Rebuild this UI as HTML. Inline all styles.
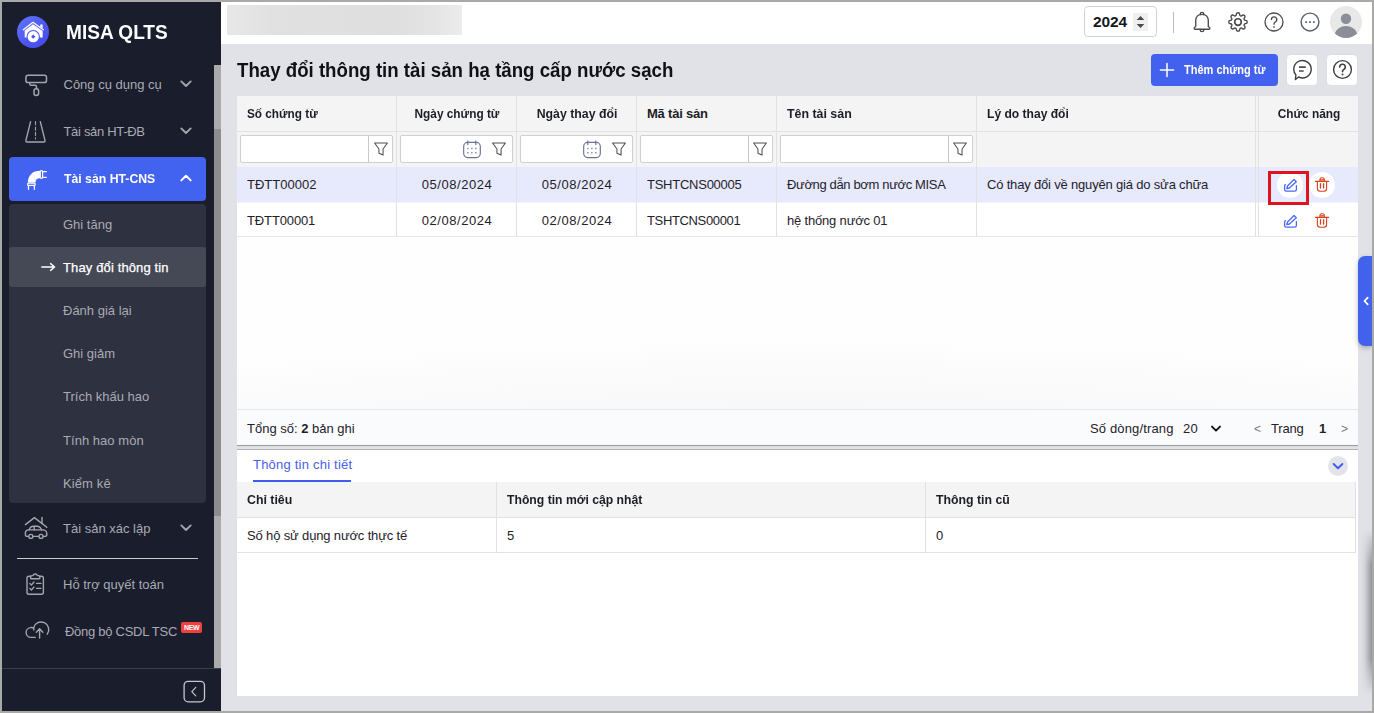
<!DOCTYPE html>
<html lang="vi">
<head>
<meta charset="utf-8">
<title>MISA QLTS</title>
<style>
*{box-sizing:border-box;margin:0;padding:0}
html,body{width:1374px;height:713px;overflow:hidden;background:#a9a9a8}
body{font-family:"Liberation Sans",sans-serif;font-size:13px;color:#1f2229;position:relative}
.abs{position:absolute}
#frame{position:absolute;left:2px;top:2px;width:1370px;height:709px;background:#e1e2e8;overflow:hidden}
/* ---------- sidebar ---------- */
#side{position:absolute;left:0;top:0;width:219px;height:709px;background:#1a1d2c}
#side .t{position:absolute;white-space:nowrap;color:#a9abb3;font-size:13px;line-height:16px}
#logo{position:absolute;left:15px;top:14px;width:32px;height:32px;border-radius:50%;background:linear-gradient(140deg,#6278f8 0%,#4f5af1 50%,#4646ee 100%)}
#brand{position:absolute;left:64px;top:18px;font-weight:bold;font-size:20px;line-height:24px;color:#fff;white-space:nowrap;}
#act{position:absolute;left:7px;top:155px;width:197px;height:44px;border-radius:4px;background:#4262f0}
#sub{position:absolute;left:7px;top:202px;width:197px;height:299px;border-radius:4px;background:#2e3140}
#subsel{position:absolute;left:7px;top:245px;width:197px;height:40px;border-radius:3px;background:#454855}
#sdiv{position:absolute;left:15px;top:556px;width:181px;height:1px;background:#c9cad0}
#sbotbar{position:absolute;left:0;top:666px;width:219px;height:43px;background:#1a1d2c;border-top:1px solid #3b3e4c}
#new{position:absolute;left:179px;top:620px;width:21px;height:11px;border-radius:2px;background:#ef4040;color:#fff;font-weight:bold;font-size:7px;line-height:11px;text-align:center;letter-spacing:-.3px;text-indent:.3px}
#strack{position:absolute;left:212px;top:63px;width:7px;height:603px;background:#acabab}
#sthumb{position:absolute;left:212px;top:127px;width:7px;height:387px;background:#8d8d8d}
/* ---------- top bar ---------- */
#top{position:absolute;left:219px;top:0;width:1151px;height:42px;background:#fff}
#blur{position:absolute;left:5.700px;top:2.800px;width:235.200px;height:30.300px;background:linear-gradient(90deg,#e9e8e9 0%,#e2e1e2 18%,#dfdfdf 70%,#e4e4e4 88%,#ececec 100%);filter:blur(.4px)}
#year{position:absolute;left:863px;top:4px;width:73px;height:31px;border:1px solid #cfd3e0;border-radius:4px;background:#fff}
#year b{position:absolute;left:8px;top:6px;font-size:15.500px;line-height:18px;color:#16181f}
#spin{position:absolute;left:48px;top:6px;width:15px;height:18px;background:#efefef}
#tsep{position:absolute;left:952px;top:10px;width:1px;height:21px;background:#b9bcc6}
#avatar{position:absolute;left:1109px;top:4px;width:32px;height:32px;border-radius:50%;background:#e8e8e8;overflow:hidden}
/* ---------- title row ---------- */
#title{position:absolute;left:235px;top:56px;font-size:20px;font-weight:bold;line-height:24px;color:#0f1115;white-space:nowrap}
#btnadd{position:absolute;left:1149px;top:52px;width:127px;height:32px;border-radius:4px;background:#4261ee;color:#fff;font-weight:bold;font-size:13px}
#btnadd span{position:absolute;left:33px;top:8px;line-height:16px;white-space:nowrap}
.sq{position:absolute;top:52.800px;width:30.400px;height:30.400px;border-radius:4px;background:#fff;box-shadow:0 -.5px 0 .3px rgba(205,210,224,.55)}
/* ---------- grid ---------- */
#grid{position:absolute;left:235px;top:94px;width:1121px;height:351px;background:#fff}
.hdr{position:absolute;left:0;top:0;width:1121px;height:36px;background:#f4f4f4;border-bottom:1px solid #e3e3e3}
.flt{position:absolute;left:0;top:36px;width:1121px;height:35px;background:#f4f4f4}
.r1{position:absolute;left:0;top:71px;width:1121px;height:35px;background:#e7eafd}
.r2{position:absolute;left:0;top:106px;width:1121px;height:35px;background:#fff;border-bottom:1px solid #e6e6e6;border-top:1px solid #f1f3fe}
.vl{position:absolute;top:0;width:1px;height:141px;background:#e2e2e2}
.c{position:absolute;white-space:nowrap;line-height:16px;font-size:13px;color:#1f2229}
.h{font-weight:bold;color:#1c1e26}
.inp{position:absolute;top:39px;height:28px;background:#fff;border:1px solid #cfcfcf;border-radius:2px}
#foot{position:absolute;left:0;top:313px;width:1121px;height:38px;border-top:1px solid #e8e8e8;background:#fafbfd}
/* ---------- detail ---------- */
#det{position:absolute;left:235px;top:448px;width:1121px;height:246px;background:#fff}
.ctr{text-align:center}
.circ{position:absolute;width:26px;height:26px;border-radius:50%;background:#fff}
#red{position:absolute;left:1031px;top:75px;width:41px;height:34px;border:3px solid #df131c}
#spl1{position:absolute;left:235px;top:443px;width:1121px;height:1px;background:#9c9c9c}
#spl2{position:absolute;left:235px;top:444px;width:1121px;height:1px;background:#dedede}
#spl3{position:absolute;left:235px;top:447px;width:1121px;height:1px;background:#b2b2b2}
#tab{position:absolute;left:16px;top:6.500px;line-height:16px;font-size:13px;color:#4a5ee6;white-space:nowrap}
#tabul{position:absolute;left:16px;top:30px;width:98px;height:2px;background:#3f5bf0}
#dcirc{position:absolute;left:1091px;top:6px;width:20px;height:20px;border-radius:50%;background:#e3e4ea}
#dh{position:absolute;left:0;top:32px;width:1119px;height:36px;background:#f4f4f4;border-bottom:1px solid #e3e3e3}
#dr{position:absolute;left:0;top:68px;width:1119px;height:35px;background:#fff;border-bottom:1px solid #e3e3e3}
#handle{position:absolute;left:1356px;top:254px;width:14px;height:90px;border-radius:7px 0 0 7px;background:#4262ee;box-shadow:0 2px 5px rgba(60,60,80,.35)}
#rshadow{position:absolute;left:1358px;top:526px;width:12px;height:168px;background:linear-gradient(90deg,rgba(100,100,108,0) 0%,rgba(100,100,108,.10) 35%,rgba(100,100,108,.36) 70%,rgba(100,100,108,.62) 100%);-webkit-mask-image:linear-gradient(180deg,transparent 0,#000 22%,#000 78%,transparent 100%);mask-image:linear-gradient(180deg,transparent 0,#000 22%,#000 78%,transparent 100%)}
</style>
</style>
</head>
<body>
<div id="frame">

<!-- SIDEBAR -->
<div id="side">
  <div id="logo">
    <svg width="32" height="32" viewBox="0 0 32 32" style="position:absolute;left:0;top:0">
      <path d="M6.300 13.700 L16 6.300 L26.300 13.700" fill="none" stroke="#fff" stroke-width="1.300" stroke-linecap="round" stroke-linejoin="round"/>
      <path d="M23.300 8.500h2.300v3.900l-2.300-1.700z" fill="#fff"/>
      <path d="M7.700 14.500 L16 8.200 L25.700 15 V21.500 H7.700 Z" fill="#fff"/>
      <circle cx="16.200" cy="20.700" r="6.700" fill="#4f57f0"/>
      <circle cx="16.200" cy="20.700" r="5.600" fill="#fff"/>
      <path d="M16.200 18.600 L18.300 20.700 L16.200 22.800 L14.100 20.700Z" fill="#4a50ee"/>
    </svg>
  </div>
  <div id="brand" style="transform:scaleX(0.954);transform-origin:left;/*fit*/">MISA QLTS</div>

  <!-- item 1 -->
  <svg class="abs" style="left:20px;top:68px" width="30" height="30" viewBox="0 0 30 30" fill="none" stroke="#a4a5ac" stroke-width="1.5" stroke-linecap="round" stroke-linejoin="round">
    <rect x="3.9" y="5.2" width="20.6" height="7.4" rx="2.2"/>
    <path d="M7.8 12.8v1.2a1.3 1.3 0 0 0 1.3 1.3h3.9a1.5 1.5 0 0 1 1.5 1.5v1.6"/>
    <rect x="12" y="18.8" width="4.6" height="6.6" rx="2.2"/>
  </svg>
  <div class="t" style="left:61.5px;top:74.5px">Công cụ dụng cụ</div>
  <svg class="abs" style="left:177px;top:77px" width="14" height="10" viewBox="0 0 14 10" fill="none" stroke="#a4a5ac" stroke-width="1.9" stroke-linecap="round" stroke-linejoin="round"><path d="M2.300 2.400 L7 7 L11.700 2.400"/></svg>

  <!-- item 2 -->
  <svg class="abs" style="left:20px;top:115px" width="30" height="30" viewBox="0 0 30 30" fill="none" stroke="#a4a5ac" stroke-width="1.4" stroke-linecap="round" stroke-linejoin="round">
    <path d="M8.600 4.600 L3.900 23.400 a1.200 1.200 0 0 0 1.100 1.600 h16.900 a1.200 1.200 0 0 0 1.100 -1.600 L18.300 4.600"/>
    <path d="M13.500 4.600v17.400" stroke-dasharray="3.200 2.200" stroke-width="1.100"/>
  </svg>
  <div class="t" style="left:61.5px;top:121.5px;letter-spacing:-0.32px;/*fit*/">Tài sản HT-ĐB</div>
  <svg class="abs" style="left:177px;top:124px" width="14" height="10" viewBox="0 0 14 10" fill="none" stroke="#a4a5ac" stroke-width="1.9" stroke-linecap="round" stroke-linejoin="round"><path d="M2.300 2.400 L7 7 L11.700 2.400"/></svg>

  <!-- item 3 active -->
  <div id="act"></div>
  <svg class="abs" style="left:22px;top:165px" width="26" height="26" viewBox="0 0 26 26">
    <path d="M3.900 15.600 C3.900 8.400 8.600 3.700 16 3.700 L16 11.300 C13 11.300 11.500 12.700 11.500 15.600 Z" fill="#fff"/>
    <rect x="16.300" y="3.700" width="2.300" height="7.500" rx=".9" fill="none" stroke="#fff" stroke-width="1.200"/>
    <path d="M19.200 4.700h3.100M19.200 10.400h3.100" stroke="#fff" stroke-width="1.200" fill="none" stroke-linecap="round"/>
    <rect x="3.600" y="16.100" width="7.600" height="2.300" rx=".9" fill="none" stroke="#fff" stroke-width="1.200"/>
    <path d="M4.500 19v3.300M10.400 19v3.300" stroke="#fff" stroke-width="1.300" fill="none" stroke-linecap="round"/>
  </svg>
  <div class="t tb" style="left:61.5px;top:168.5px;color:#fff;font-weight:bold;transform:scaleX(0.943);transform-origin:left;/*fit*/">Tài sản HT-CNS</div>
  <svg class="abs" style="left:177px;top:171px" width="14" height="10" viewBox="0 0 14 10" fill="none" stroke="#fff" stroke-width="2" stroke-linecap="round" stroke-linejoin="round"><path d="M2.3 7.4 L7 2.8 L11.7 7.4"/></svg>

  <!-- submenu -->
  <div id="sub"></div>
  <div id="subsel"></div>
  <div class="t" style="left:61px;top:214.5px">Ghi tăng</div>
  <svg class="abs" style="left:38px;top:259px" width="18" height="12" viewBox="0 0 18 12" fill="none" stroke="#fff" stroke-width="1.4" stroke-linecap="round" stroke-linejoin="round"><path d="M1.8 6h12.6M10.6 2.6 L14.6 6 L10.6 9.4"/></svg>
  <div class="t" style="left:61px;top:257.5px;color:#fff;-webkit-text-stroke:.25px #fff;letter-spacing:0.13px;/*fit*/">Thay đổi thông tin</div>
  <div class="t" style="left:61px;top:300.5px">Đánh giá lại</div>
  <div class="t" style="left:61px;top:343.5px">Ghi giảm</div>
  <div class="t" style="left:61px;top:386.5px">Trích khấu hao</div>
  <div class="t" style="left:61px;top:430.5px;letter-spacing:0.04px;/*fit*/">Tính hao mòn</div>
  <div class="t" style="left:61px;top:473.5px;letter-spacing:0.11px;/*fit*/">Kiểm kê</div>

  <!-- item 4 -->
  <svg class="abs" style="left:19px;top:511px" width="32" height="32" viewBox="0 0 32 32" fill="none" stroke="#a4a5ac" stroke-width="1.4" stroke-linecap="round" stroke-linejoin="round">
    <path d="M4.4 11.6 L13.4 4.6 L25.8 14.2"/>
    <path d="M21 4.4v6"/>
    <path d="M8.2 16.9 C8.8 14.4 10 13.2 12.6 13.2 h3.4 c2.4 0 3.6 1.4 4.6 3.7"/>
    <path d="M13.2 13.4v3.4"/>
    <path d="M7.2 23.4 H6.4 a2 2 0 0 1 -2 -2 v-1.7 a2.8 2.8 0 0 1 2.8 -2.8 H21.8 a4 4 0 0 1 4 4 v.5 a2 2 0 0 1 -2 2 H22.6 M12.4 23.4h5"/>
    <circle cx="9.800" cy="23.400" r="2"/>
    <circle cx="20" cy="23.400" r="2"/>
  </svg>
  <div class="t" style="left:61px;top:518.5px">Tài sản xác lập</div>
  <svg class="abs" style="left:177px;top:521px" width="14" height="10" viewBox="0 0 14 10" fill="none" stroke="#a4a5ac" stroke-width="1.9" stroke-linecap="round" stroke-linejoin="round"><path d="M2.300 2.400 L7 7 L11.700 2.400"/></svg>

  <div id="sdiv"></div>

  <!-- item 5 -->
  <svg class="abs" style="left:19px;top:566px" width="32" height="32" viewBox="0 0 32 32" fill="none" stroke="#a4a5ac" stroke-width="1.4" stroke-linecap="round" stroke-linejoin="round">
    <path d="M9.400 8.200 H8 a2 2 0 0 0 -2 2 V24.200 a2 2 0 0 0 2 2 H20.400 a2 2 0 0 0 2 -2 V10.200 a2 2 0 0 0 -2 -2 H19"/>
    <path d="M9.6 10.2 v-1.2 a1.4 1.4 0 0 1 1.4 -1.4 h1 a2.3 2.3 0 0 1 4.4 0 h1 a1.4 1.4 0 0 1 1.4 1.4 v1.2 a.6.6 0 0 1 -.6 .6 H10.2 a.6 .6 0 0 1 -.6 -.6z"/>
    <path d="M8.8 15.4 l1.6 1.6 2.6 -3" stroke-width="1.3"/>
    <path d="M8.8 20.4 l1.6 1.6 2.6 -3" stroke-width="1.3"/>
    <path d="M15.6 15.4h4.4M15.6 20.4h4.4"/>
  </svg>
  <div class="t" style="left:61px;top:574.5px">Hỗ trợ quyết toán</div>

  <!-- item 6 -->
  <svg class="abs" style="left:19.500px;top:611.300px" width="34" height="32" viewBox="0 0 34 32" fill="none" stroke="#a4a5ac" stroke-width="1.4" stroke-linecap="round" stroke-linejoin="round">
    <path d="M13.2 24.4 H9 a4.9 4.9 0 0 1 -.6 -9.76 a3.6 3.6 0 0 1 3.4 0.6 V17"/>
    <path d="M11.6 14.8 A7.7 7.7 0 1 1 25.3 21.2"/>
    <path d="M17.600 25v-9.200M14.300 19.200 l3.300 -3.400 3.300 3.400"/>
  </svg>
  <div class="t" style="left:63px;top:621.5px;letter-spacing:-0.27px;/*fit*/">Đồng bộ CSDL TSC</div>
  <div id="new">NEW</div>

  <div id="strack"></div>
  <div id="sthumb"></div>
  <div id="sthumb2"></div>
  <div id="sbotbar"></div>
  <svg class="abs" style="left:180px;top:677px" width="26" height="26" viewBox="0 0 26 26" fill="none" stroke="#c6c7cc" stroke-width="1.3" stroke-linecap="round" stroke-linejoin="round">
    <rect x="2.1" y="2.4" width="20.4" height="20.4" rx="4"/>
    <path d="M13.800 8.400 L9.800 12.600 L13.800 16.800" stroke-width="1.200"/>
  </svg>
</div>

<!-- TOPBAR -->
<div id="top">
  <div id="blur"></div>
  <div id="year"><b style="letter-spacing:-0.150px;">2024</b><div id="spin"><svg width="15" height="18" viewBox="0 0 15 18" style="position:absolute;left:0;top:0"><path d="M7.500 3 L11.300 7 H3.700Z M7.500 15 L11.300 11 H3.700Z" fill="#484848"/></svg></div></div>
  <div id="tsep"></div>
  <!-- bell -->
  <svg class="abs" style="left:969px;top:7.300px" width="24" height="26" viewBox="0 0 24 26" fill="none" stroke="#4a4a4c" stroke-width="1.350" stroke-linecap="round" stroke-linejoin="round">
    <path d="M10.200 5.800 V5.100 a1.800 1.800 0 0 1 3.600 0 V5.800"/>
    <path d="M5.700 17.200 V11.800 C5.700 7.800 8.300 5.300 12 5.300 C15.700 5.300 18.300 7.800 18.300 11.800 V17.200 C18.300 17.900 19.900 18.300 19.900 19.300 C19.900 19.900 19.500 20.200 19 20.200 H5 C4.500 20.200 4.100 19.900 4.100 19.300 C4.100 18.300 5.700 17.900 5.700 17.200 Z"/>
    <path d="M10.200 20.500 v.400 a1.800 1.700 0 0 0 3.600 0 v-.400"/>
  </svg>
  <!-- gear -->
  <svg class="abs" style="left:1005px;top:8px" width="24" height="24" viewBox="0 0 24 24" fill="none" stroke="#4a4a4c" stroke-width="1.65" stroke-linecap="round" stroke-linejoin="round">
    <circle cx="12" cy="12" r="3.3"/>
    <path d="M19.400 15 a1.650 1.650 0 0 0 .330 1.820 l.060 .060 a2 2 0 1 1 -2.830 2.830 l-.060 -.060 a1.650 1.650 0 0 0 -1.820 -.330 1.650 1.650 0 0 0 -1 1.510 V21 a2 2 0 0 1 -4 0 v-.090 A1.650 1.650 0 0 0 9 19.400 a1.650 1.650 0 0 0 -1.820 .330 l-.060 .060 a2 2 0 1 1 -2.830 -2.830 l.060 -.060 a1.650 1.650 0 0 0 .330 -1.820 1.650 1.650 0 0 0 -1.510 -1 H3 a2 2 0 0 1 0 -4 h.090 A1.650 1.650 0 0 0 4.600 9 a1.650 1.650 0 0 0 -.330 -1.820 l-.060 -.060 a2 2 0 1 1 2.830 -2.830 l.060 .060 a1.650 1.650 0 0 0 1.820 .330 H9 a1.650 1.650 0 0 0 1 -1.510 V3 a2 2 0 0 1 4 0 v.090 a1.650 1.650 0 0 0 1 1.510 1.650 1.650 0 0 0 1.820 -.330 l.060 -.060 a2 2 0 1 1 2.830 2.830 l-.060 .060 a1.650 1.650 0 0 0 -.330 1.820 V9 a1.650 1.650 0 0 0 1.510 1 H21 a2 2 0 0 1 0 4 h-.090 a1.650 1.650 0 0 0 -1.510 1z" transform="translate(12 12) scale(.84) translate(-12 -12)"/>
  </svg>
  <!-- help -->
  <svg class="abs" style="left:1041px;top:8px" width="24" height="24" viewBox="0 0 24 24" fill="none" stroke="#4a4a4c" stroke-width="1.3" stroke-linecap="round" stroke-linejoin="round">
    <circle cx="12" cy="12" r="9"/>
    <path d="M9.400 9.600 a2.700 2.700 0 1 1 3.900 2.400 c-.900 .500 -1.300 1 -1.300 2 v.300"/>
    <path d="M12 16.900v.1" stroke-width="1.7"/>
  </svg>
  <!-- more -->
  <svg class="abs" style="left:1077px;top:8px" width="24" height="24" viewBox="0 0 24 24" fill="none" stroke="#5b606c" stroke-width="1.450" stroke-linecap="butt">
    <circle cx="12" cy="12" r="8.900"/>
    <path d="M7.200 12.100h1.900M11 12.100h1.900M14.900 12.100h1.900" stroke-width="1.800" stroke="#6a6f7c"/>
  </svg>
  <div id="avatar"><svg width="32" height="32" viewBox="0 0 32 32"><circle cx="16" cy="12.800" r="5.200" fill="#8b8e99"/><path d="M4.500 30.500 a11.500 10.500 0 0 1 23 0 v3 h-23z" fill="#8b8e99"/></svg></div>
</div>

<!-- TITLE ROW -->
<div id="title" style="transform:scaleX(0.933);transform-origin:left;/*fit*/">Thay đổi thông tin tài sản hạ tầng cấp nước sạch</div>
<div id="btnadd">
  <svg class="abs" style="left:8px;top:8px" width="16" height="16" viewBox="0 0 16 16" fill="none" stroke="#fff" stroke-width="1.5" stroke-linecap="round"><path d="M8 1.400v13.200M1.400 8h13.200"/></svg>
  <span style="transform:scaleX(0.848);transform-origin:left;/*fit*/">Thêm chứng từ</span>
</div>
<div class="sq" style="left:1284.800px">
  <svg class="abs" style="left:3.900px;top:4.300px" width="24" height="24" viewBox="0 0 24 24" fill="none" stroke="#3e3e40" stroke-width="1.400" stroke-linecap="round" stroke-linejoin="round">
    <path d="M7.600 18 L4.400 20.500 L4.900 15.900 A8.700 8.700 0 1 1 7.600 18 Z"/>
    <path d="M8 8.100h6.800M8 12h4.700" stroke-width="1.600" stroke-linecap="butt" stroke="#4a4a4c"/>
  </svg>
</div>
<div class="sq" style="left:1324.900px">
  <svg class="abs" style="left:2.900px;top:2.700px" width="24" height="24" viewBox="0 0 24 24" fill="none" stroke="#3e3e40" stroke-width="1.400" stroke-linecap="round" stroke-linejoin="round">
    <circle cx="12.500" cy="12.500" r="8.900"/>
    <path d="M9.700 10.100 a2.800 2.800 0 1 1 4.100 2.400 c-.900 .500 -1.300 1 -1.300 2 v.300" stroke-width="1.600"/>
    <path d="M12.500 17.400v.1" stroke-width="1.900"/>
  </svg>
</div>

<!-- GRID -->
<div id="grid">
  <div class="abs" style="left:0;top:142px;width:1121px;height:171px;background:radial-gradient(ellipse 75% 80px at 50% 108%,#f7f7f8 0%,#fafafb 55%,#fefefe 100%)"></div>
  <div class="hdr"></div><div class="flt"></div><div class="r1"></div><div class="r2"></div>
  <div class="vl" style="left:159px"></div><div class="vl" style="left:279px"></div><div class="vl" style="left:399px"></div>
  <div class="vl" style="left:539px"></div><div class="vl" style="left:739px"></div>
  <div class="vl" style="left:1018px"></div><div class="vl" style="left:1021px"></div>

  <div class="c h" style="left:10px;top:10px;transform:scaleX(0.906);transform-origin:left;/*fit*/">Số chứng từ</div>
  <div class="c h ctr" style="left:160px;width:120px;top:10px;transform:scaleX(0.911);transform-origin:center;/*fit*/">Ngày chứng từ</div>
  <div class="c h ctr" style="left:280px;width:120px;top:10px;transform:scaleX(0.947);transform-origin:center;/*fit*/">Ngày thay đổi</div>
  <div class="c h" style="left:410px;top:10px;letter-spacing:-0.21px;/*fit*/">Mã tài sản</div>
  <div class="c h" style="left:550px;top:10px;transform:scaleX(0.953);transform-origin:left;/*fit*/">Tên tài sản</div>
  <div class="c h" style="left:750px;top:10px;transform:scaleX(0.929);transform-origin:left;/*fit*/">Lý do thay đổi</div>
  <div class="c h ctr" style="left:1023px;width:98px;top:10px;transform:scaleX(0.913);transform-origin:center;/*fit*/">Chức năng</div>

  <div class="inp" style="left:3px;width:153px"><i style="position:absolute;left:127px;top:0;width:1px;height:26px;background:#c9c9c9"></i></div>
  <div class="inp" style="left:163px;width:113px"></div>
  <div class="inp" style="left:283px;width:113px"></div>
  <div class="inp" style="left:403px;width:133px"><i style="position:absolute;left:107px;top:0;width:1px;height:26px;background:#c9c9c9"></i></div>
  <div class="inp" style="left:543px;width:193px"><i style="position:absolute;left:167px;top:0;width:1px;height:26px;background:#c9c9c9"></i></div>
  <svg class="abs" style="left:135.6px;top:45px" width="16" height="16" viewBox="0 0 16 16" fill="none" stroke="#4d4f57" stroke-width="1.05" stroke-linejoin="round" stroke-linecap="round"><path d="M1.600 2 H14.400 L10.050 8 V14.100 L5.950 12.200 V8 Z"/></svg> <svg class="abs" style="left:253.9px;top:45px" width="16" height="16" viewBox="0 0 16 16" fill="none" stroke="#4d4f57" stroke-width="1.05" stroke-linejoin="round" stroke-linecap="round"><path d="M1.600 2 H14.400 L10.050 8 V14.100 L5.950 12.200 V8 Z"/></svg> <svg class="abs" style="left:373.9px;top:45px" width="16" height="16" viewBox="0 0 16 16" fill="none" stroke="#4d4f57" stroke-width="1.05" stroke-linejoin="round" stroke-linecap="round"><path d="M1.600 2 H14.400 L10.050 8 V14.100 L5.950 12.200 V8 Z"/></svg> <svg class="abs" style="left:515.2px;top:45px" width="16" height="16" viewBox="0 0 16 16" fill="none" stroke="#4d4f57" stroke-width="1.05" stroke-linejoin="round" stroke-linecap="round"><path d="M1.600 2 H14.400 L10.050 8 V14.100 L5.950 12.200 V8 Z"/></svg> <svg class="abs" style="left:715.1px;top:45px" width="16" height="16" viewBox="0 0 16 16" fill="none" stroke="#4d4f57" stroke-width="1.05" stroke-linejoin="round" stroke-linecap="round"><path d="M1.600 2 H14.400 L10.050 8 V14.100 L5.950 12.200 V8 Z"/></svg> <svg class="abs" style="left:225.2px;top:44px" width="20" height="20" viewBox="0 0 20 20" fill="none" stroke="#6a7290" stroke-width="1.150" stroke-linecap="round"><rect x="1.700" y="2.400" width="16.600" height="15.200" rx="4"/><path d="M5.800 .900v3.800M13.800 .900v3.800"/><path d="M5.200 8.600h1.300M9.200 8.600h1.300M13.200 8.600h1.300M5.200 12.700h1.300M9.200 12.700h1.300M13.200 12.700h1.300" stroke-width="1.500" stroke-linecap="butt" stroke="#7a819b"/></svg> <svg class="abs" style="left:345.2px;top:44px" width="20" height="20" viewBox="0 0 20 20" fill="none" stroke="#6a7290" stroke-width="1.150" stroke-linecap="round"><rect x="1.700" y="2.400" width="16.600" height="15.200" rx="4"/><path d="M5.800 .900v3.800M13.800 .900v3.800"/><path d="M5.200 8.600h1.300M9.200 8.600h1.300M13.200 8.600h1.300M5.200 12.700h1.300M9.200 12.700h1.300M13.200 12.700h1.300" stroke-width="1.500" stroke-linecap="butt" stroke="#7a819b"/></svg>

  <div class="c" style="left:10px;top:81px">TĐTT00002</div>
  <div class="c ctr d" style="left:160px;width:120px;top:81px;letter-spacing:0.54px;/*fit*/">05/08/2024</div>
  <div class="c ctr d" style="left:280px;width:120px;top:81px;letter-spacing:0.54px;/*fit*/">05/08/2024</div>
  <div class="c" style="left:410px;top:81px;letter-spacing:-0.25px;/*fit*/">TSHTCNS00005</div>
  <div class="c" style="left:550px;top:81px;letter-spacing:-0.35px;/*fit*/">Đường dẫn bơm nước MISA</div>
  <div class="c" style="left:750px;top:81px;letter-spacing:-0.18px;/*fit*/">Có thay đổi về nguyên giá do sửa chữa</div>

  <div class="c" style="left:10px;top:117px;letter-spacing:-0.13px;/*fit*/">TĐTT00001</div>
  <div class="c ctr d" style="left:160px;width:120px;top:117px;letter-spacing:0.54px;/*fit*/">02/08/2024</div>
  <div class="c ctr d" style="left:280px;width:120px;top:117px;letter-spacing:0.54px;/*fit*/">02/08/2024</div>
  <div class="c" style="left:410px;top:117px;letter-spacing:-0.35px;/*fit*/">TSHTCNS00001</div>
  <div class="c" style="left:550px;top:117px;letter-spacing:-0.18px;/*fit*/">hệ thống nước 01</div>

  <div class="circ" style="left:1040px;top:76px"></div>
  <div class="circ" style="left:1072px;top:76px"></div>
  <div id="red"></div>
  <svg class="abs" style="left:1045px;top:81px" width="16" height="16" viewBox="0 0 16 16" fill="none" stroke="#4a6af5" stroke-width="1.3" stroke-linecap="round" stroke-linejoin="round"><path d="M12 2.500 L14.300 4.800 L7.400 11 L4.900 11.500 L5.500 9 Z"/><path d="M3.500 7.700 a1.500 1.500 0 0 0 -.900 1.500 v3.200 a1.700 1.700 0 0 0 1.700 1.700 h8.400 a1.700 1.700 0 0 0 1.700 -1.700 V8.600"/></svg> <svg class="abs" style="left:1076px;top:80px" width="18" height="18" viewBox="0 0 18 18" fill="none" stroke="#d9411e" stroke-width="1.1" stroke-linecap="round" stroke-linejoin="round"><path d="M2.400 5.400h13.200"/><path d="M6.900 5.200 V3.600 a1.800 1.800 0 0 1 1.800 -1.800 h.800 a1.800 1.800 0 0 1 1.800 1.800 V5.200"/><path d="M7.400 3.900h3.400"/><path d="M4.400 5.600 V12.600 a2.700 2.700 0 0 0 2.700 2.700 h3.800 a2.700 2.700 0 0 0 2.700 -2.700 V5.600"/><path d="M7.500 7.700v4.300M10.600 7.700v4.300" stroke-width="1.300"/></svg> <svg class="abs" style="left:1045px;top:117px" width="16" height="16" viewBox="0 0 16 16" fill="none" stroke="#4a6af5" stroke-width="1.3" stroke-linecap="round" stroke-linejoin="round"><path d="M12 2.500 L14.300 4.800 L7.400 11 L4.900 11.500 L5.500 9 Z"/><path d="M3.500 7.700 a1.500 1.500 0 0 0 -.900 1.500 v3.200 a1.700 1.700 0 0 0 1.700 1.700 h8.400 a1.700 1.700 0 0 0 1.700 -1.700 V8.600"/></svg> <svg class="abs" style="left:1076px;top:116px" width="18" height="18" viewBox="0 0 18 18" fill="none" stroke="#d9411e" stroke-width="1.1" stroke-linecap="round" stroke-linejoin="round"><path d="M2.400 5.400h13.200"/><path d="M6.900 5.200 V3.600 a1.800 1.800 0 0 1 1.800 -1.800 h.800 a1.800 1.800 0 0 1 1.800 1.800 V5.200"/><path d="M7.400 3.900h3.400"/><path d="M4.400 5.600 V12.600 a2.700 2.700 0 0 0 2.700 2.700 h3.800 a2.700 2.700 0 0 0 2.700 -2.700 V5.600"/><path d="M7.500 7.700v4.300M10.600 7.700v4.300" stroke-width="1.300"/></svg>

  <div id="foot">
    <div class="c" style="left:10px;top:11px">Tổng số: <b>2</b> bản ghi</div>
    <div class="c" style="left:853px;top:11px;letter-spacing:0.14px;/*fit*/">Số dòng/trang</div>
    <div class="c" style="left:946px;top:11px;letter-spacing:0.33px;/*fit*/">20</div>
    <svg class="abs" style="left:972px;top:14px" width="14" height="10" viewBox="0 0 14 10" fill="none" stroke="#111" stroke-width="1.9" stroke-linecap="round" stroke-linejoin="round"><path d="M3 2.600 L7 6.600 L11 2.600"/></svg>
    <div class="c" style="left:1017px;top:11px;color:#777;font-size:12px">&lt;</div>
    <div class="c" style="left:1034px;top:11px;letter-spacing:-0.20px;/*fit*/">Trang</div>
    <div class="c" style="left:1082px;top:11px;font-weight:bold">1</div>
    <div class="c" style="left:1104px;top:11px;color:#777;font-size:12px">&gt;</div>
  </div>
</div>
<div id="spl1"></div><div id="spl2"></div><div id="spl3"></div>

<!-- DETAIL -->
<div id="det">
  <div id="tab" style="letter-spacing:0.22px;/*fit*/">Thông tin chi tiết</div>
  <div id="tabul"></div>
  <div id="dcirc"><svg width="20" height="20" viewBox="0 0 20 20" fill="none" stroke="#3f5bf0" stroke-width="1.9" stroke-linecap="round" stroke-linejoin="round"><path d="M5.600 8 L10 12.200 L14.400 8"/></svg></div>
  <div id="dh"></div>
  <div id="dr"></div>
  <div class="vl" style="left:259px;top:32px;height:71px"></div>
  <div class="vl" style="left:688px;top:32px;height:71px"></div>
  <div class="vl" style="left:1118px;top:32px;height:71px"></div>
  <div class="c h" style="left:10px;top:42px;transform:scaleX(0.950);transform-origin:left;/*fit*/">Chỉ tiêu</div>
  <div class="c h" style="left:270px;top:42px;transform:scaleX(0.938);transform-origin:left;/*fit*/">Thông tin mới cập nhật</div>
  <div class="c h" style="left:699px;top:42px;transform:scaleX(0.946);transform-origin:left;/*fit*/">Thông tin cũ</div>
  <div class="c" style="left:10px;top:78px;letter-spacing:-0.15px;/*fit*/">Số hộ sử dụng nước thực tế</div>
  <div class="c" style="left:270px;top:78px">5</div>
  <div class="c" style="left:699px;top:78px">0</div>
</div>

<!-- right handle + shadow -->
<div id="rshadow"></div>
<div id="handle"><svg width="14" height="90" viewBox="0 0 14 90" fill="none" stroke="#fff" stroke-width="1.800" stroke-linecap="round" stroke-linejoin="round"><path d="M9.700 41.600 L6.500 45 L9.700 48.400"/></svg></div>

</div>
</body>
</html>
